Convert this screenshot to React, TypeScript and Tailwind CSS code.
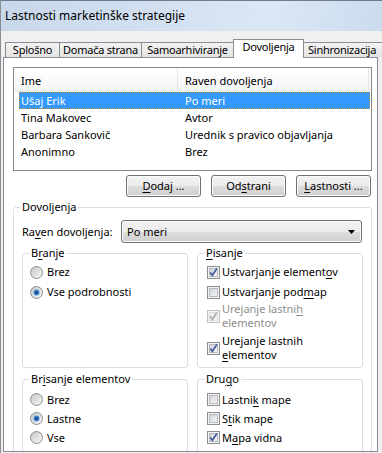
import React from 'react';

const U: React.FC<{ children: React.ReactNode }> = ({ children }) => (
  <span className="underline decoration-1 underline-offset-[2px]">{children}</span>
);

const CheckBox: React.FC<{ checked?: boolean; disabled?: boolean }> = ({ checked, disabled }) => (
  <svg width="13" height="13" viewBox="0 0 13 13" className="shrink-0">
    <defs>
      <linearGradient id="cbInner" x1="0" y1="0" x2="1" y2="1">
        <stop offset="0" stopColor="#cdd1d7" />
        <stop offset="1" stopColor="#f8f8f8" />
      </linearGradient>
    </defs>
    <rect x="0.5" y="0.5" width="12" height="12" fill="#f4f4f4" stroke={disabled ? '#c2c2c2' : '#8e8f8f'} />
    <rect
      x="2.5"
      y="2.5"
      width="8"
      height="8"
      fill={disabled ? '#f1f1f1' : 'url(#cbInner)'}
      stroke={disabled ? '#dedede' : '#b6bbc1'}
    />
    {checked && (
      <path
        d="M3.3 6.4 L5.4 9.3 L9.9 2.4"
        fill="none"
        stroke={disabled ? '#a9a9a9' : '#41589a'}
        strokeWidth="1.7"
      />
    )}
  </svg>
);

const Radio: React.FC<{ checked?: boolean }> = ({ checked }) => (
  <svg width="13" height="13" viewBox="0 0 13 13" className="shrink-0">
    <defs>
      <linearGradient id="rbFill" x1="0" y1="0" x2="1" y2="1">
        <stop offset="0" stopColor="#c3c3c3" />
        <stop offset="1" stopColor="#fbfbfb" />
      </linearGradient>
      <radialGradient id="rbDot" cx="0.5" cy="0.5" r="0.5">
        <stop offset="0" stopColor="#0d3875" />
        <stop offset="0.55" stopColor="#2c6bb8" />
        <stop offset="1" stopColor="#86bdeb" />
      </radialGradient>
    </defs>
    <circle cx="6.5" cy="6.5" r="6" fill="url(#rbFill)" stroke="#8e8f8f" />
    {checked && <circle cx="6.5" cy="6.5" r="3.2" fill="url(#rbDot)" />}
  </svg>
);

const Button: React.FC<{ children: React.ReactNode }> = ({ children }) => (
  <div className="flex h-[22px] w-[75px] items-center justify-center rounded-[3px] border border-[#707070] bg-[linear-gradient(#f2f2f2_0%,#ebebeb_50%,#dddddd_51%,#cfcfcf_100%)] shadow-[inset_0_0_0_1px_#fbfbfb]">
    {children}
  </div>
);

const Item: React.FC<{ control: React.ReactNode; gap: string; h: string; children: React.ReactNode }> = ({
  control,
  gap,
  h,
  children,
}) => (
  <div className={`flex items-center ${gap} ${h}`}>
    {control}
    <span>{children}</span>
  </div>
);

const users = [
  { name: 'Ušaj Erik', level: 'Po meri', selected: true },
  { name: 'Tina Makovec', level: 'Avtor' },
  { name: 'Barbara Sankovič', level: 'Urednik s pravico objavljanja' },
  { name: 'Anonimno', level: 'Brez' },
];

export default function App() {
  return (
    <div className="h-[453px] w-[382px] overflow-hidden border-l border-[#8a8f96] bg-[#f0f0f0] font-['Noto_Sans',sans-serif] text-[11px] leading-[16px] text-black">
      {/* title bar */}
      <div className="flex h-[31px] items-center border-t border-[#6f7c8b] bg-[linear-gradient(100deg,#c8d8eb_0%,#d3e1f1_45%,#dbe7f4_70%,#cbdcee_100%)] pl-[4px] text-[12px]">
        Lastnosti marketinške strategije
      </div>

      {/* tabs */}
      <div className="mt-[8px] flex h-[18px] items-end whitespace-nowrap pl-[4px] tracking-[-0.25px]">
        <div className="flex h-[15px] w-[55px] shrink-0 justify-center border border-b-0 border-[#898c95] bg-[linear-gradient(#f3f3f3,#e4e4e4)] leading-[14px]">
          Splošno
        </div>
        <div className="-ml-px flex h-[15px] w-[83px] shrink-0 justify-center border border-b-0 border-[#898c95] bg-[linear-gradient(#f3f3f3,#e4e4e4)] leading-[14px]">
          Domača strana
        </div>
        <div className="-ml-px flex h-[15px] w-[93px] shrink-0 justify-center border border-b-0 border-[#898c95] bg-[linear-gradient(#f3f3f3,#e4e4e4)] leading-[14px]">
          Samoarhiviranje
        </div>
        <div className="relative z-10 -mb-px -ml-px flex h-[19px] w-[71px] shrink-0 justify-center border border-b-0 border-[#898c95] bg-white leading-[14px]">
          Dovoljenja
        </div>
        <div className="-ml-px h-[15px] w-[82px] shrink-0 border border-b-0 border-[#898c95] bg-[linear-gradient(#f3f3f3,#e4e4e4)] pl-[4px] leading-[14px]">
          Sinhronizacija
        </div>
      </div>

      {/* tab page */}
      <div className="ml-[2px] h-[395px] w-[375px] overflow-hidden border border-[#898c95] bg-white">
        {/* list */}
        <div className="ml-[9px] mt-[9px] h-[104px] w-[359px] border border-[#828790] bg-white">
          <div className="flex h-[24px] border-b border-[#e5e7ea] bg-[linear-gradient(#ffffff,#f3f4f6)]">
            <div className="flex w-[164px] items-center border-r border-[#e3e5e8] pl-[7px] pt-[2px]">Ime</div>
            <div className="flex w-[191px] items-center border-r border-[#e3e5e8] pl-[7px] pt-[2px]">
              Raven dovoljenja
            </div>
          </div>
          {users.map((u) => (
            <div
              key={u.name}
              className={`ml-[5px] mr-[1px] flex h-[17px] items-center border ${
                u.selected ? 'border-dotted border-[#c98a3a] bg-[#3399ff] text-white' : 'border-transparent'
              }`}
            >
              <div className="w-[158px] pl-[1px]">{u.name}</div>
              <div className="pl-[7px]">{u.level}</div>
            </div>
          ))}
        </div>

        {/* buttons */}
        <div className="mt-[4px] flex justify-end gap-[10px] pr-[6px]">
          <Button>
            <U>D</U>odaj ...
          </Button>
          <Button>
            Od<U>s</U>trani
          </Button>
          <Button>
            <U>L</U>astnosti ...
          </Button>
        </div>

        {/* permissions */}
        <fieldset className="ml-[9px] mt-[2px] w-[359px] rounded-[3px] border border-[#d5dfe5] px-[8px] pb-[40px]">
          <legend className="-ml-[2px] px-[2px]">Dovoljenja</legend>

          <div className="mt-[5px] flex h-[23px] items-center">
            <div className="w-[99px]">
              Ra<U>v</U>en dovoljenja:
            </div>
            <div className="flex h-[23px] w-[241px] items-center justify-between rounded-[3px] border border-[#707070] bg-[linear-gradient(#f2f2f2_0%,#ebebeb_50%,#dddddd_51%,#cfcfcf_100%)] pl-[5px] pr-[6px] shadow-[inset_0_0_0_1px_#fbfbfb]">
              <span>Po meri</span>
              <svg width="7" height="4" viewBox="0 0 7 4">
                <path d="M0 0 H7 L3.5 4 Z" fill="#000" />
              </svg>
            </div>
          </div>

          <div className="mt-[2px] grid grid-cols-[166px_166px] gap-x-[9px] gap-y-[3px]">
            <fieldset className="rounded-[3px] border border-[#d5dfe5] pb-[5px] pl-[7px]">
              <legend className="-ml-[1px] px-[2px]">
                B<U>r</U>anje
              </legend>
              <div className="pt-[1px]">
                <Item control={<Radio />} gap="gap-[4px]" h="h-[20px]">
                  Brez
                </Item>
                <Item control={<Radio checked />} gap="gap-[4px]" h="h-[20px]">
                  Vse podrobnosti
                </Item>
              </div>
            </fieldset>

            <fieldset className="rounded-[3px] border border-[#d5dfe5] pb-[5px] pl-[9px]">
              <legend className="-ml-[3px] px-[2px]">
                <U>P</U>isanje
              </legend>
              <div className="pt-[1px]">
                <Item control={<CheckBox checked />} gap="gap-[2px]" h="h-[20px]">
                  Ustvarjanje element<U>o</U>v
                </Item>
                <Item control={<CheckBox />} gap="gap-[2px]" h="h-[20px]">
                  Ustvarjanje pod<U>m</U>ap
                </Item>
                <div className="flex h-[28px] items-center gap-[2px] text-[#8d8d8d]">
                  <CheckBox checked disabled />
                  <span className="leading-[14px]">
                    Urejanje lastni<U>h</U>
                    <br />
                    elementov
                  </span>
                </div>
                <div className="mt-[4px] flex h-[28px] items-center gap-[2px]">
                  <CheckBox checked />
                  <span className="leading-[14px]">
                    Urejanje lastnih
                    <br />
                    <U>e</U>lementov
                  </span>
                </div>
              </div>
            </fieldset>

            <fieldset className="rounded-[3px] border border-[#d5dfe5] pb-[20px] pl-[7px]">
              <legend className="-ml-[1px] px-[2px]">
                Br<U>i</U>sanje elementov
              </legend>
              <div className="pt-[3px]">
                <Item control={<Radio />} gap="gap-[4px]" h="h-[19px]">
                  Brez
                </Item>
                <Item control={<Radio checked />} gap="gap-[4px]" h="h-[19px]">
                  Lastne
                </Item>
                <Item control={<Radio />} gap="gap-[4px]" h="h-[19px]">
                  Vse
                </Item>
              </div>
            </fieldset>

            <fieldset className="rounded-[3px] border border-[#d5dfe5] pb-[20px] pl-[9px]">
              <legend className="-ml-[3px] px-[2px]">
                Dru<U>g</U>o
              </legend>
              <div className="pt-[3px]">
                <Item control={<CheckBox />} gap="gap-[2px]" h="h-[19px]">
                  Lastni<U>k</U> mape
                </Item>
                <Item control={<CheckBox />} gap="gap-[2px]" h="h-[19px]">
                  S<U>t</U>ik mape
                </Item>
                <Item control={<CheckBox checked />} gap="gap-[2px]" h="h-[19px]">
                  M<U>a</U>pa vidna
                </Item>
              </div>
            </fieldset>
          </div>
        </fieldset>
      </div>
    </div>
  );
}
